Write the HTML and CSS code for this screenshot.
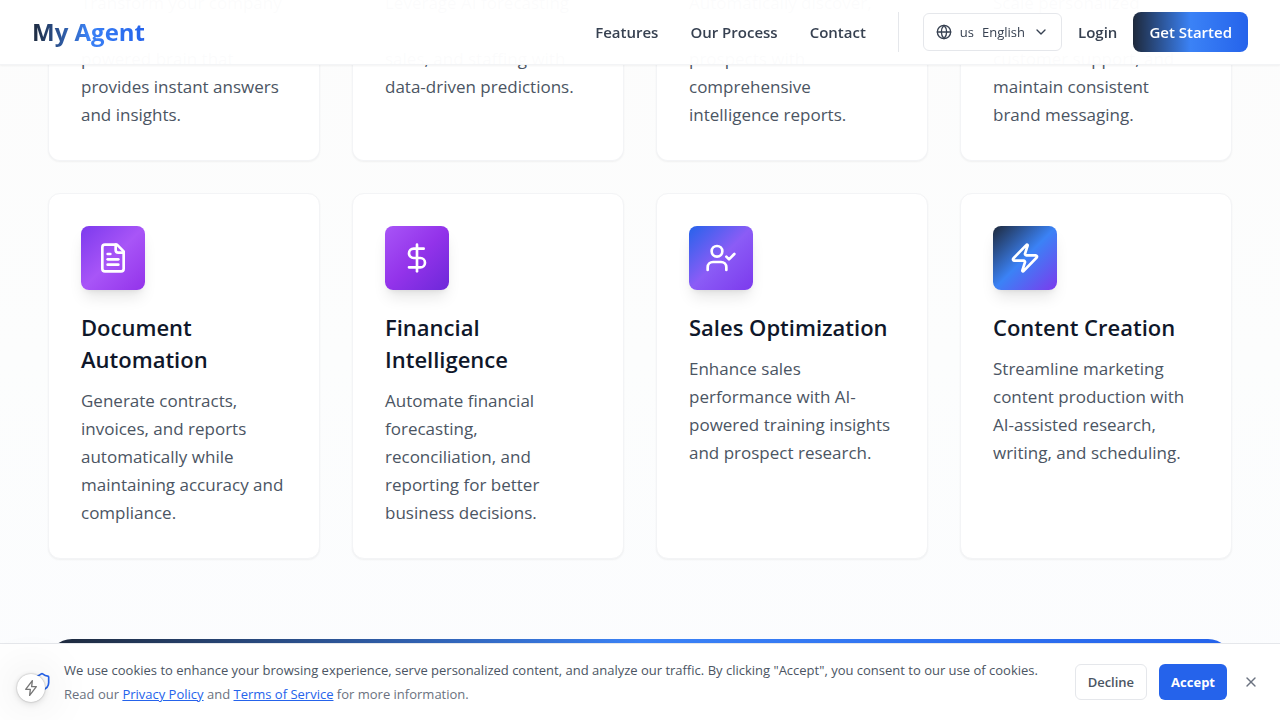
FILE: index.html
```html
<!DOCTYPE html>
<html lang="en">
<head>
<meta charset="utf-8">
<meta name="viewport" content="width=device-width, initial-scale=1">
<title>My Agent</title>
<link rel="stylesheet" href="styles.css">
</head>
<body>
<header class="site-header">
  <a class="logo" href="#">My Agent</a>
  <nav class="nav">
    <div class="nav-links">
      <a class="nav-link" href="#features">Features</a>
      <a class="nav-link" href="#process">Our Process</a>
      <a class="nav-link" href="#contact">Contact</a>
    </div>
    <div class="nav-actions">
      <button class="language" type="button" aria-haspopup="listbox">
        <svg class="icon-16" viewBox="0 0 24 24"><circle cx="12" cy="12" r="10"/><path d="M12 2a14.5 14.5 0 0 0 0 20 14.5 14.5 0 0 0 0-20"/><path d="M2 12h20"/></svg>
        <span>us</span><span>English</span>
        <svg class="icon-16" viewBox="0 0 24 24"><path d="m6 9 6 6 6-6"/></svg>
      </button>
      <a class="nav-link" href="#login">Login</a>
      <button class="get-started" type="button">Get Started</button>
    </div>
  </nav>
</header>

<main class="features" id="features">
  <div class="cards">
    <article class="card card-scrolled">
      <p class="card-text">Transform your company<br><br>powered brain that<br>provides instant answers<br>and insights.</p>
    </article>
    <article class="card card-scrolled">
      <p class="card-text">Leverage AI forecasting<br><br>sales, and staffing with<br>data-driven predictions.</p>
    </article>
    <article class="card card-scrolled">
      <p class="card-text">Automatically discover,<br><br>prospects with<br>comprehensive<br>intelligence reports.</p>
    </article>
    <article class="card card-scrolled">
      <p class="card-text">Scale personalized<br><br>customer support, and<br>maintain consistent<br>brand messaging.</p>
    </article>

    <article class="card">
      <div class="tile tile-document">
        <svg class="icon-32" viewBox="0 0 24 24"><path d="M15 2H6a2 2 0 0 0-2 2v16a2 2 0 0 0 2 2h12a2 2 0 0 0 2-2V7Z"/><path d="M14 2v4a2 2 0 0 0 2 2h4"/><path d="M10 9H8"/><path d="M16 13H8"/><path d="M16 17H8"/></svg>
      </div>
      <h3 class="card-title">Document Automation</h3>
      <p class="card-text">Generate contracts, invoices, and reports automatically while maintaining accuracy and compliance.</p>
    </article>
    <article class="card">
      <div class="tile tile-finance">
        <svg class="icon-32" viewBox="0 0 24 24"><path d="M12 2v20"/><path d="M17 5H9.5a3.5 3.5 0 0 0 0 7h5a3.5 3.5 0 0 1 0 7H6"/></svg>
      </div>
      <h3 class="card-title">Financial Intelligence</h3>
      <p class="card-text">Automate financial forecasting,<br>reconciliation, and<br>reporting for better business decisions.</p>
    </article>
    <article class="card">
      <div class="tile tile-sales">
        <svg class="icon-32" viewBox="0 0 24 24"><path d="m16 11 2 2 4-4"/><path d="M16 21v-2a4 4 0 0 0-4-4H6a4 4 0 0 0-4 4v2"/><circle cx="9" cy="7" r="4"/></svg>
      </div>
      <h3 class="card-title">Sales Optimization</h3>
      <p class="card-text">Enhance sales performance with AI-powered training insights and prospect research.</p>
    </article>
    <article class="card">
      <div class="tile tile-content">
        <svg class="icon-32" viewBox="0 0 24 24"><path d="M4 14a1 1 0 0 1-.78-1.63l9.9-10.2a.5.5 0 0 1 .86.46l-1.92 6.02A1 1 0 0 0 13 10h7a1 1 0 0 1 .78 1.63l-9.9 10.2a.5.5 0 0 1-.86-.46l1.92-6.02A1 1 0 0 0 11 14z"/></svg>
      </div>
      <h3 class="card-title">Content Creation</h3>
      <p class="card-text">Streamline marketing content production with AI-assisted research, writing, and scheduling.</p>
    </article>
  </div>
  <div class="cta"></div>
</main>

<aside class="cookies" aria-label="Cookie consent">
  <svg class="shield" viewBox="0 0 24 24"><path d="M20 13c0 5-3.5 7.5-7.66 8.95a1 1 0 0 1-.67-.01C7.5 20.5 4 18 4 13V6a1 1 0 0 1 1-1c2 0 4.5-1.2 6.24-2.72a1.17 1.17 0 0 1 1.52 0C14.51 3.81 17 5 19 5a1 1 0 0 1 1 1z"/></svg>
  <div class="cookie-copy">
    <p class="cookie-line">We use cookies to enhance your browsing experience, serve personalized content, and analyze our traffic. By clicking "Accept", you consent to our use of cookies.</p>
    <p class="cookie-line cookie-more">Read our <a class="cookie-link" href="#privacy">Privacy Policy</a> and <a class="cookie-link" href="#terms">Terms of Service</a> for more information.</p>
  </div>
  <div class="cookie-actions">
    <button class="decline" type="button">Decline</button>
    <button class="accept" type="button">Accept</button>
    <button class="close" type="button" aria-label="Close"><svg class="icon-16" viewBox="0 0 24 24"><path d="M18 6 6 18"/><path d="m6 6 12 12"/></svg></button>
  </div>
</aside>
<button class="quick" type="button" aria-label="Quick actions">
  <svg class="icon-16" viewBox="0 0 24 24"><path d="M14 1 4 14h7l-1 9 10-13h-7z"/></svg>
</button>
</body>
</html>
```
FILE: styles.css
```css
* { box-sizing: border-box; }
body {
  margin: 0;
  height: 100vh;
  overflow: hidden;
  font-family: "Segoe UI", "Open Sans", "Noto Sans", sans-serif;
  color: #374151;
  background: linear-gradient(180deg, #fcfcfc, #fcfdfd 50%, #fbfcfe);
}
h3, p { margin: 0; }
a { color: inherit; text-decoration: none; }
button { font: inherit; color: inherit; cursor: pointer; }
svg {
  display: block;
  flex: none;
  fill: none;
  stroke: currentColor;
  stroke-width: 2;
  stroke-linecap: round;
  stroke-linejoin: round;
}
.icon-16 { width: 16px; height: 16px; }
.icon-32 { width: 32px; height: 32px; }

.site-header {
  position: fixed;
  inset: 0 0 auto;
  z-index: 2;
  display: flex;
  align-items: center;
  justify-content: space-between;
  padding: 12px 32px;
  background: rgba(255, 255, 255, 0.98);
  border-bottom: 1px solid #f3f4f6;
  box-shadow: 0 1px 2px rgba(0, 0, 0, 0.05);
}
.logo {
  font-size: 24px;
  line-height: 32px;
  font-weight: 700;
  color: transparent;
  background: linear-gradient(90deg, #1e293b, #3b82f6 50%, #2563eb);
  -webkit-background-clip: text;
  background-clip: text;
}
.nav { display: flex; align-items: center; gap: 32px; }
.nav-links { display: flex; gap: 32px; }
.nav-link { font-size: 15px; line-height: 24px; font-weight: 600; }
.nav-actions {
  display: flex;
  align-items: center;
  gap: 16px;
  height: 40px;
  padding-left: 24px;
  border-left: 1px solid #e5e7eb;
}
.language {
  display: flex;
  align-items: center;
  gap: 8px;
  height: 38px;
  padding: 0 12px;
  font-size: 13px;
  background: #fff;
  border: 1px solid #e5e7eb;
  border-radius: 6px;
}
.get-started {
  height: 40px;
  padding: 0 16px;
  font-size: 15px;
  font-weight: 600;
  color: #fff;
  background: linear-gradient(90deg, #1e293b, #3b82f6 50%, #2563eb);
  border: 0;
  border-radius: 8px;
}

.features { padding: 0 48px; }
.cards {
  display: grid;
  grid-template-columns: repeat(4, minmax(0, 1fr));
  gap: 32px;
  margin-top: -11px;
}
.card {
  padding: 32px 32px 31px;
  background: #fff;
  border: 1px solid #f3f4f6;
  border-radius: 12px;
  box-shadow: 0 1px 2px rgba(0, 0, 0, 0.05);
}
.card-scrolled {
  padding-top: 0;
  border-top: 0;
  border-radius: 0 0 12px 12px;
}
.tile {
  display: grid;
  place-items: center;
  width: 64px;
  height: 64px;
  margin-bottom: 21px;
  color: #fff;
  border-radius: 8px;
  box-shadow: 0 10px 15px -3px rgba(0, 0, 0, 0.1), 0 4px 6px -4px rgba(0, 0, 0, 0.1);
}
.tile-document { background: linear-gradient(135deg, #7c3aed, #a855f7 50%, #9333ea); }
.tile-finance { background: linear-gradient(135deg, #a855f7, #9333ea 50%, #6d28d9); }
.tile-sales { background: linear-gradient(135deg, #2563eb, #8b5cf6 50%, #7c3aed); }
.tile-content { background: linear-gradient(135deg, #1e293b, #3b82f6 50%, #7c3aed); }
.card-title {
  margin-bottom: 12px;
  font-size: 22px;
  line-height: 32px;
  font-weight: 600;
  color: #0f172a;
}
.card-text {
  font-size: 17px;
  line-height: 28px;
  color: #4b5563;
}
.cta {
  height: 240px;
  margin-top: 80px;
  border-radius: 24px;
  background: linear-gradient(90deg, #1e293b, #3b82f6 50%, #2563eb);
}

.cookies {
  position: fixed;
  inset: auto 0 0;
  z-index: 3;
  display: flex;
  align-items: center;
  padding: 16px 17px 16px 32px;
  background: #fff;
  border-top: 1px solid #e5e7eb;
}
.shield { width: 20px; height: 20px; margin-right: 12px; color: #2563eb; }
.cookie-copy { flex: 1; display: grid; gap: 4px; }
.cookie-line { font-size: 13px; line-height: 20px; color: #4b5563; }
.cookie-more { color: #6b7280; }
.cookie-link { color: #2563eb; text-decoration: underline; }
.cookie-actions { display: flex; align-items: center; gap: 12px; margin-left: 12px; }
.decline, .accept {
  height: 36px;
  padding: 0 12px;
  font-size: 13px;
  font-weight: 600;
  border-radius: 6px;
}
.decline { color: #4b5563; background: #fff; border: 1px solid #e5e7eb; }
.accept { color: #fff; background: #2563eb; border: 0; font-weight: 700; }
.close { padding: 4px; color: #6b7280; background: none; border: 0; }

.quick {
  position: fixed;
  left: 17px;
  bottom: 18px;
  z-index: 4;
  display: grid;
  place-items: center;
  width: 28px;
  height: 28px;
  padding: 0;
  color: #777;
  background: #fff;
  border: 0;
  border-radius: 50%;
  box-shadow: 0 0 2px rgba(0, 0, 0, 0.35), 0 2px 8px rgba(0, 0, 0, 0.12), 0 0 48px rgba(0, 0, 0, 0.18);
}
```
